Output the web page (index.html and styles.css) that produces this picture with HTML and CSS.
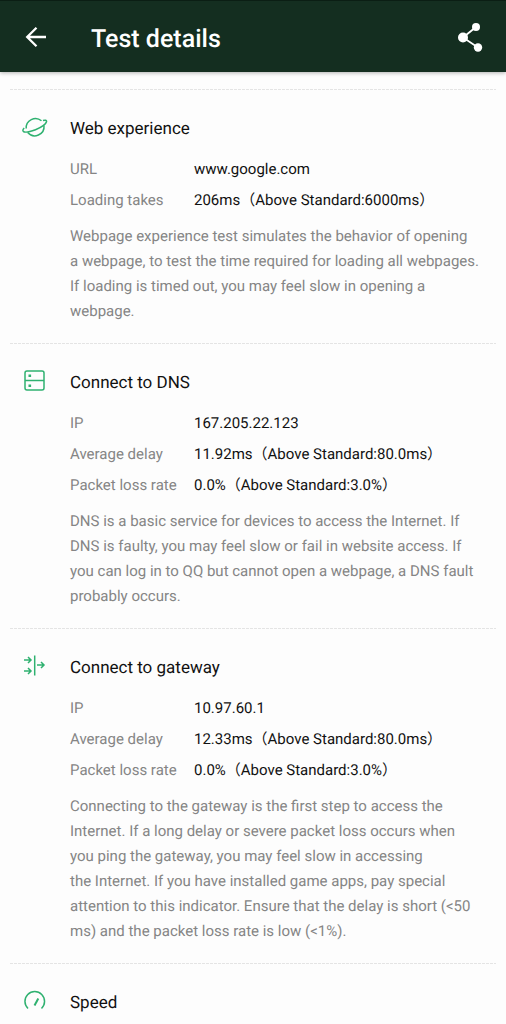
FILE: index.html
```html
<!DOCTYPE html>
<html lang="en">
<head>
<meta charset="utf-8">
<meta name="viewport" content="width=device-width, initial-scale=1">
<title>Test details</title>
<link rel="stylesheet" href="styles.css">
</head>
<body>
<header class="bar">
  <button class="bar-button" type="button" aria-label="Back">
    <svg width="24" height="24" viewBox="0 0 24 24" fill="none" stroke="#fff" stroke-width="2.300"><path d="M22 10H3.500M12.500 .8L3.200 10l9.300 9.200"/></svg>
  </button>
  <h1 class="bar-title">Test details</h1>
  <button class="bar-button" type="button" aria-label="Share">
    <svg width="30" height="32" viewBox="0 0 30 32" fill="#fff"><path d="M21 4L8 14.500l15 10" fill="none" stroke="#fff" stroke-width="1.800"/><circle cx="21" cy="4" r="4"/><circle cx="8" cy="14.500" r="5"/><circle cx="23" cy="24.500" r="4.200"/></svg>
  </button>
</header>
<main class="content">
  <section class="test">
    <svg class="icon" viewBox="0 0 26 26"><path d="M4.200 14.500A9.300 9.300 0 0 1 19.500 6.800M22 11.500A9.300 9.300 0 0 1 5.700 18.500"/><path d="M21 6.500c2.300-.7 3.900-.3 3.500 1.300-.7 2.700-5.500 5.700-11 7.900-5.500 2.100-11 3.300-12.300 1.500-.6-.9-.2-2 1-3.200"/></svg>
    <div class="body">
      <h2 class="title">Web experience</h2>
      <dl class="facts">
        <dt>URL</dt><dd>www.google.com</dd>
        <dt>Loading takes</dt><dd>206ms（Above Standard:6000ms）</dd>
      </dl>
      <p class="note">Webpage experience test simulates the behavior of opening a&nbsp;webpage, to test the time required for loading all webpages. If loading is timed out, you may feel slow in opening a webpage.</p>
    </div>
  </section>
  <section class="test">
    <svg class="icon" viewBox="0 0 26 26"><rect x="3" y="3" width="19" height="19" rx="2"/><path d="M3 12.500h19"/><path class="dot" d="M6.500 6.500h2.600v2.600H6.500zM6.500 16.500h2.600v2.600H6.500z"/></svg>
    <div class="body">
      <h2 class="title">Connect to DNS</h2>
      <dl class="facts">
        <dt>IP</dt><dd>167.205.22.123</dd>
        <dt>Average delay</dt><dd>11.92ms（Above Standard:80.0ms）</dd>
        <dt>Packet loss rate</dt><dd>0.0%（Above Standard:3.0%）</dd>
      </dl>
      <p class="note">DNS is a basic service for devices to access the Internet. If DNS is faulty, you may feel slow or fail in website access. If you can log in to QQ but cannot open a webpage, a DNS fault probably occurs.</p>
    </div>
  </section>
  <section class="test">
    <svg class="icon" viewBox="0 0 26 26"><path d="M12.700 2.500v20M2 7h7M6 4l3 3-3 3M2 18h7M6 15l3 3-3 3M15 12h7M19 9l3 3-3 3"/></svg>
    <div class="body">
      <h2 class="title">Connect to gateway</h2>
      <dl class="facts">
        <dt>IP</dt><dd>10.97.60.1</dd>
        <dt>Average delay</dt><dd>12.33ms（Above Standard:80.0ms）</dd>
        <dt>Packet loss rate</dt><dd>0.0%（Above Standard:3.0%）</dd>
      </dl>
      <p class="note">Connecting to the gateway is the first step to access the Internet. If a long delay or severe packet loss occurs when you ping the gateway, you may feel slow in accessing the&nbsp;Internet. If you have installed game apps, pay special attention to this indicator. Ensure that the delay is short (&lt;50 ms) and the packet loss rate is low (&lt;1%).</p>
    </div>
  </section>
  <section class="test">
    <svg class="icon" viewBox="0 0 26 26"><path d="M6 20.500A9.800 9.800 0 1 1 19.500 20.500"/><path d="M12.500 17.500L16.300 10.500" stroke-width="2"/></svg>
    <div class="body">
      <h2 class="title">Speed</h2>
    </div>
  </section>
</main>
</body>
</html>
```
FILE: styles.css
```css
* {
  box-sizing: border-box;
}

body {
  margin: 0;
  background: #fdfdfd;
  color: #111;
  font-family: Roboto, "Noto Sans CJK SC", sans-serif;
  font-size: 15px;
  text-rendering: geometricPrecision;
}

h1, h2, dl, dd, p {
  margin: 0;
}

.bar {
  display: flex;
  align-items: center;
  height: 72px;
  padding: 4px 20px 0;
  background: #142e20;
  border-top: 1px solid #0b1e14;
  box-shadow: 0 1px 4px rgba(0, 0, 0, 0.3);
}

.bar-button {
  display: flex;
  align-items: center;
  justify-content: center;
  width: 32px;
  height: 40px;
  padding: 0;
  border: 0;
  background: none;
}

.bar-title {
  flex: 1;
  padding: 2px 0 0 39px;
  color: #fff;
  font-size: 25px;
  font-weight: 500;
  line-height: 32px;
}

.content {
  padding: 17px 10px 0;
}

.test {
  display: flex;
  gap: 22px;
  padding: 25px 15px 19px 12px;
  background: repeating-linear-gradient(90deg, #e4e4e4 0 3px, transparent 3px 4px) top / 100% 1px no-repeat;
}

.icon {
  flex: none;
  width: 26px;
  height: 26px;
  fill: none;
  stroke: #2fb170;
  stroke-width: 1.5;
}

.dot {
  fill: #2fb170;
  stroke: none;
}

.body {
  flex: 1;
  min-width: 0;
}

.title {
  font-size: 17px;
  font-weight: 400;
  line-height: 30px;
}

.facts {
  display: grid;
  grid-template-columns: 124px 1fr;
  grid-auto-rows: 31px;
  padding-top: 10px;
  line-height: 31px;
}

.facts dt,
.note {
  color: #858585;
}

.note {
  padding-top: 8px;
  line-height: 25px;
}
```
